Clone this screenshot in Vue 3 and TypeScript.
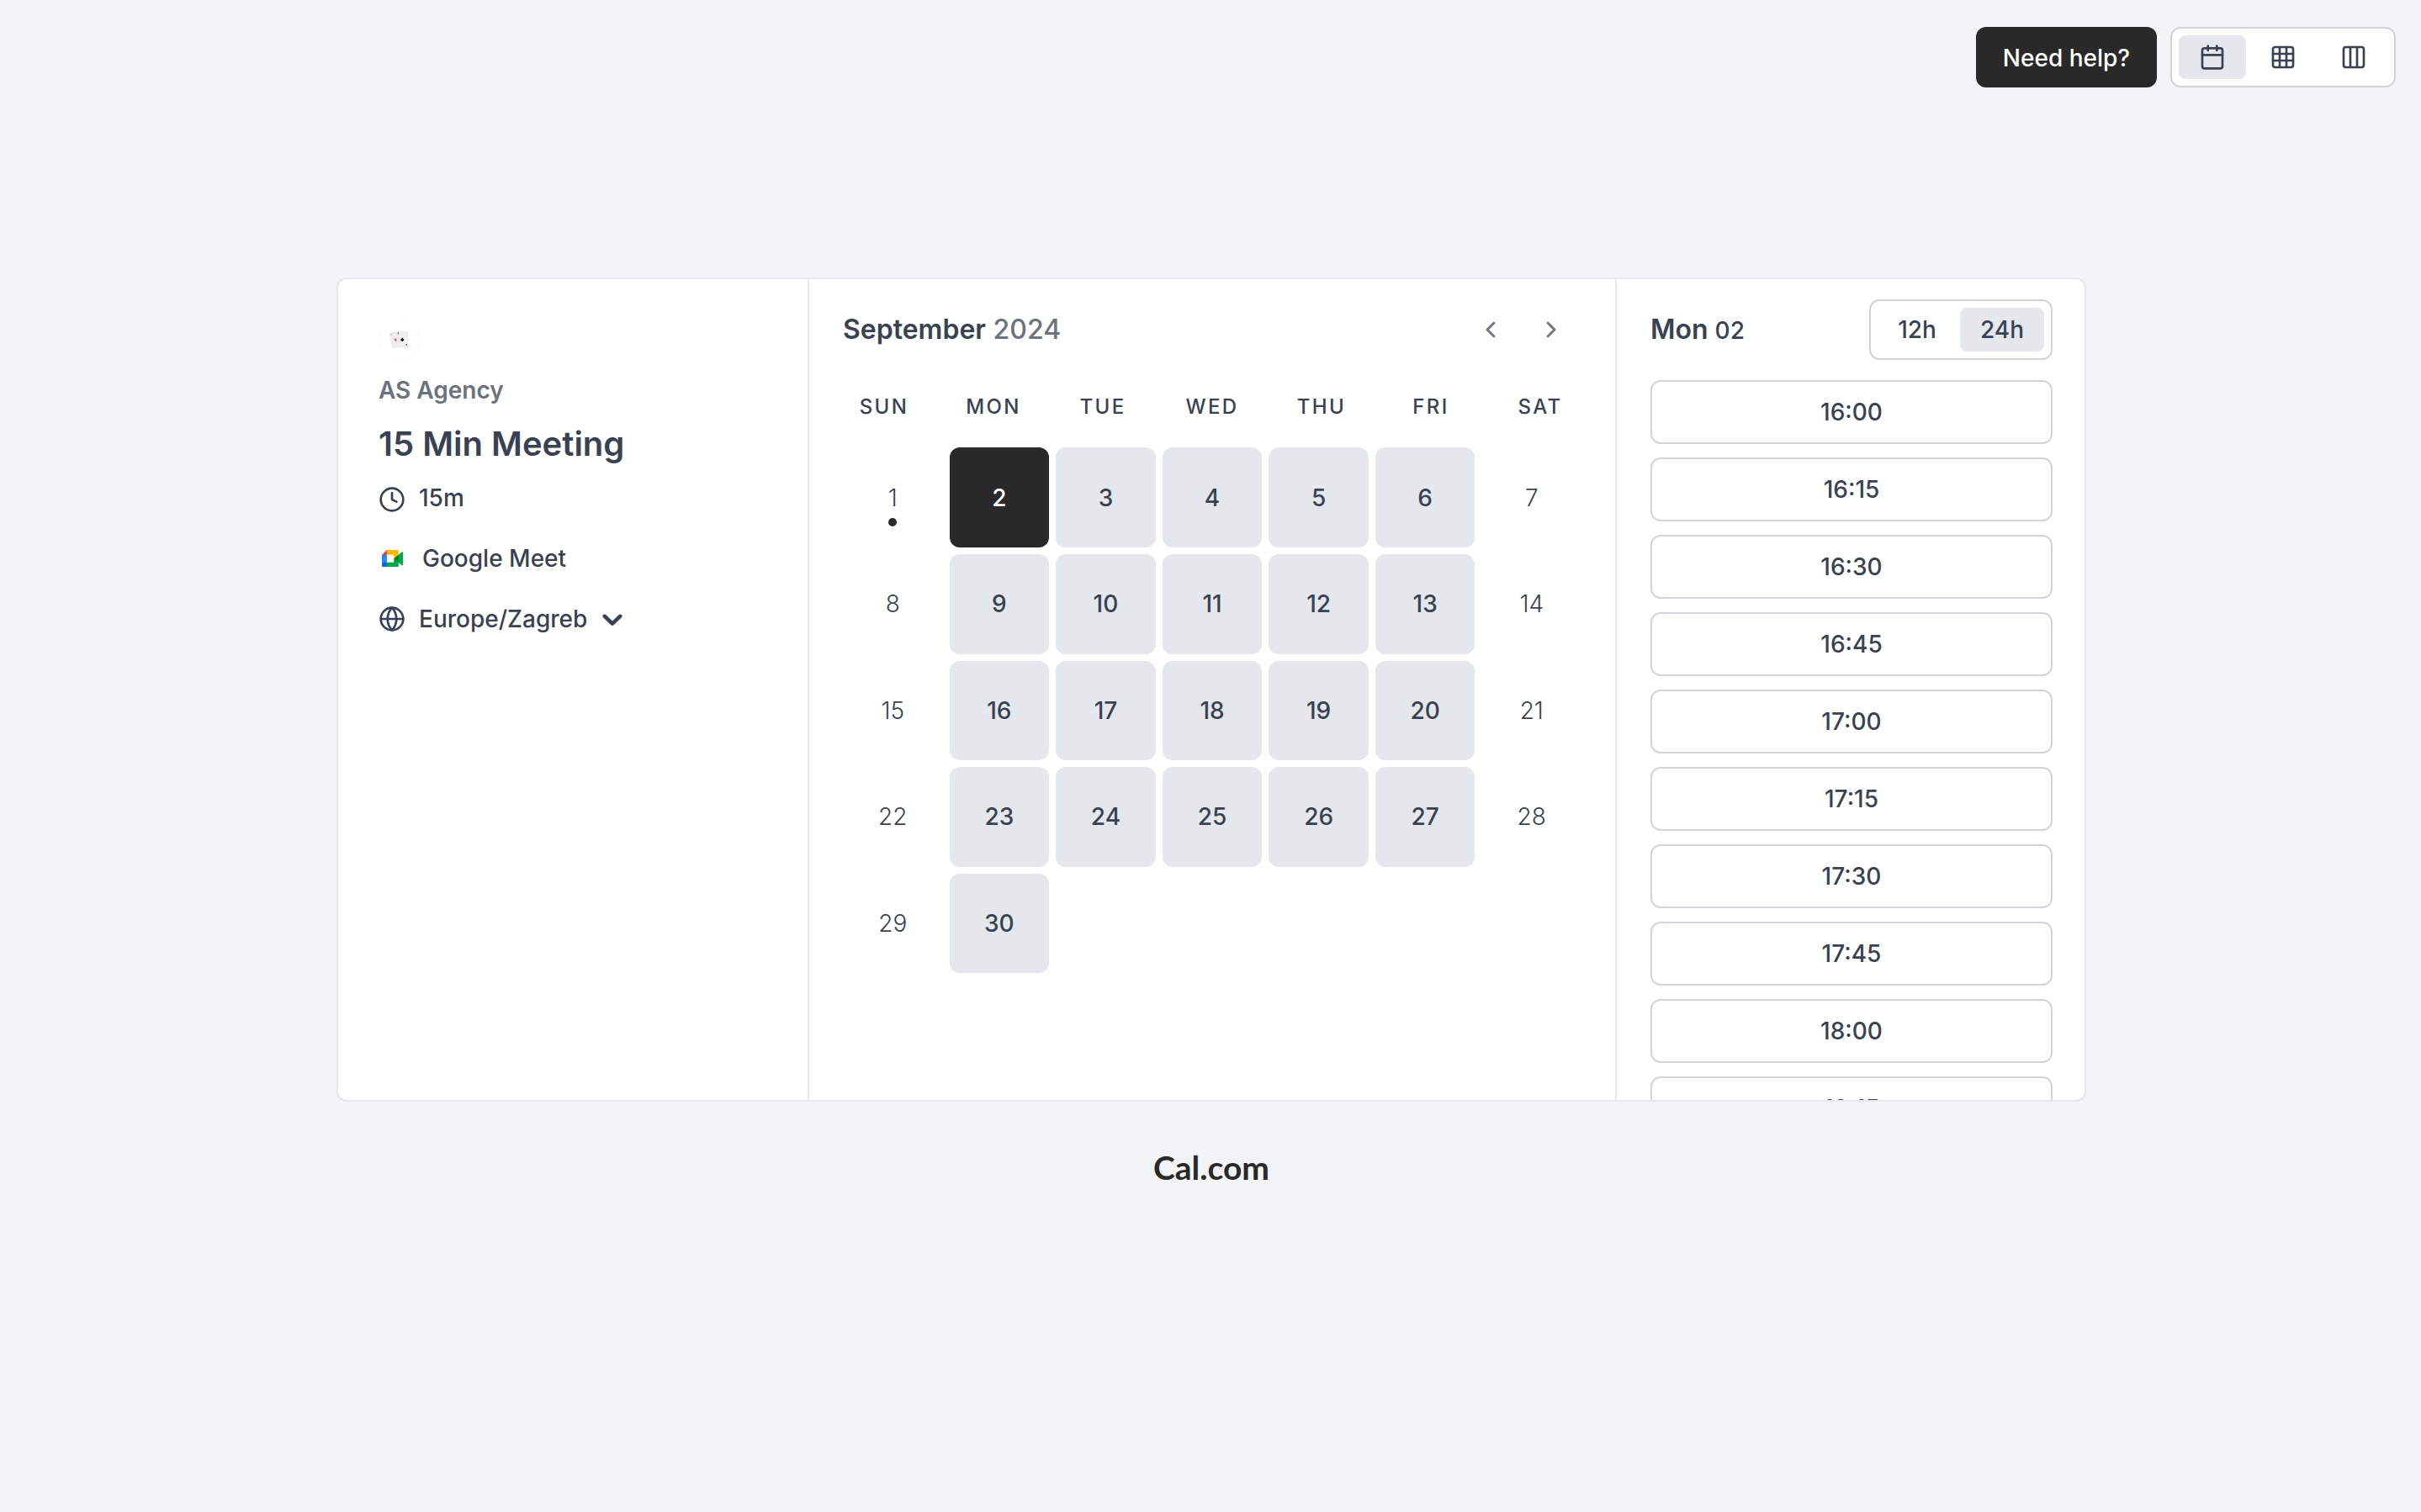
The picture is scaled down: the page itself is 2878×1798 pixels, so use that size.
<script setup lang="ts">
interface Day {
  n: number
  open: boolean
}

const weekdays: string[] = ['SUN', 'MON', 'TUE', 'WED', 'THU', 'FRI', 'SAT']
const today = 1
const selected = 2

const days: Day[] = Array.from({ length: 30 }, (_, i) => ({
  n: i + 1,
  open: i % 7 !== 0 && i % 7 !== 6,
}))

const slots: string[] = Array.from({ length: 10 }, (_, i) => {
  const minutes = 16 * 60 + i * 15
  return `${Math.floor(minutes / 60)}:${String(minutes % 60).padStart(2, '0')}`
})
</script>

<template>
  <div class="page">
    <header class="topbar">
      <button class="help">Need help?</button>
      <div class="group layouts">
        <button class="seg active">
          <svg class="icon" viewBox="0 0 24 24"><rect x="3" y="4" width="18" height="18" rx="2" /><path d="M16 2v4M8 2v4M3 10h18" /></svg>
        </button>
        <button class="seg">
          <svg class="icon" viewBox="0 0 24 24"><rect x="3" y="3" width="18" height="18" rx="2" /><path d="M3 9h18M3 15h18M9 3v18M15 3v18" /></svg>
        </button>
        <button class="seg">
          <svg class="icon" viewBox="0 0 24 24"><rect x="3" y="3" width="18" height="18" rx="2" /><path d="M9 3v18M15 3v18" /></svg>
        </button>
      </div>
    </header>

    <main class="card">
      <section class="info">
        <div class="avatar">
          <svg viewBox="0 0 48 48" width="48" height="48">
            <circle cx="24" cy="24" r="23.7" fill="#fff" stroke="#f3f3f3" stroke-width=".5" />
            <path d="M13 15.6l9-1.4 3 18.6-9 1.6z" fill="#ededec" />
            <rect x="21.5" y="14" width="13.5" height="19" rx=".6" fill="#efefee" stroke="#e4e4e3" stroke-width=".3" />
            <path d="M14.3 17.5l1.6-.2-.5 1.7zM18.6 22.6l1.4.2 1.4-.4v3l-1 .6-1.8-2z" fill="#fb5b63" />
            <path d="M28.3 21.6l1.9 2.2c.4 1.2-.7 1.9-1.4 1.3l.3 1h-1.6l.3-1c-.7.6-1.8-.1-1.4-1.3z" fill="#111" />
            <path d="M22.9 15.3h1v1h-.3v1.5h-.8v-1.5zM32.7 29h1v2h-1z" fill="#333" />
          </svg>
        </div>
        <p class="org">AS Agency</p>
        <h1 class="title">15 Min Meeting</h1>
        <div class="meta">
          <div class="row">
            <svg class="icon low" viewBox="0 0 24 24"><circle cx="12" cy="12" r="10" /><path d="M12 6v6l4 2" /></svg>
            <span>15m</span>
          </div>
          <div class="row meet">
            <svg class="meet-logo" viewBox="0 0 87.5 72">
              <path fill="#00832d" d="M49.5 36l8.53 9.75 11.47 7.33 2-17.02-2-16.64-11.69 6.44z" />
              <path fill="#0066da" d="M0 51.5V66c0 3.315 2.685 6 6 6h14.5l3-10.96-3-9.54-9.95-3z" />
              <path fill="#e94235" d="M20.5 0L0 20.5l10.55 3 9.95-3 2.95-9.41z" />
              <path fill="#2684fc" d="M20.5 20.5H0v31h20.5z" />
              <path fill="#00ac47" d="M82.6 8.68L69.5 19.42v33.66l13.16 10.79c1.97 1.54 4.85.135 4.85-2.37V11c0-2.535-2.945-3.925-4.91-2.32zM49.5 36v15.5h-29V72h43c3.315 0 6-2.685 6-6V53.08z" />
              <path fill="#ffba00" d="M63.5 0h-43v20.5h29V36l20-16.57V6c0-3.315-2.685-6-6-6z" />
            </svg>
            <span>Google Meet</span>
          </div>
          <div class="row">
            <svg class="icon" viewBox="0 0 24 24"><circle cx="12" cy="12" r="10" /><path d="M2 12h20M12 2a15.3 15.3 0 0 1 4 10 15.3 15.3 0 0 1-4 10 15.3 15.3 0 0 1-4-10 15.3 15.3 0 0 1 4-10z" /></svg>
            <span>Europe/Zagreb</span>
            <svg class="caret" viewBox="0 0 20 20"><path d="M4.516 7.548c.436-.446 1.043-.481 1.576 0L10 11.295l3.908-3.747c.533-.481 1.141-.446 1.574 0 .436.445.408 1.197 0 1.615-.406.418-4.695 4.502-4.695 4.502-.217.223-.502.335-.787.335s-.57-.112-.789-.335c0 0-4.287-4.084-4.695-4.502s-.436-1.17 0-1.615z" /></svg>
          </div>
        </div>
      </section>

      <section class="calendar">
        <div class="month">
          <div class="month-name"><strong>September</strong> <span>2024</span></div>
          <div class="nav">
            <svg class="icon" viewBox="0 0 24 24"><path d="M15 18l-6-6 6-6" /></svg>
            <svg class="icon" viewBox="0 0 24 24"><path d="M9 18l6-6-6-6" /></svg>
          </div>
        </div>
        <div class="weekdays">
          <div v-for="d in weekdays" :key="d">{{ d }}</div>
        </div>
        <div class="days">
          <div
            v-for="d in days"
            :key="d.n"
            class="day"
            :class="{ open: d.open, selected: d.n === selected }"
          >
            {{ d.n }}
            <i v-if="d.n === today" class="dot"></i>
          </div>
        </div>
      </section>

      <section class="times">
        <div class="times-head">
          <div class="date"><strong>Mon</strong><span>02</span></div>
          <div class="group">
            <button class="seg h12">12h</button>
            <button class="seg h24 active">24h</button>
          </div>
        </div>
        <div class="slots">
          <button v-for="s in slots" :key="s" class="slot">{{ s }}</button>
        </div>
      </section>
    </main>

    <footer class="brand">Cal.com</footer>
  </div>
</template>

<style>
body {
  background: #f3f4f6;
}
</style>

<style scoped>
.page {
  min-height: 100vh;
  box-sizing: border-box;
  padding-top: 32px;
  background: #f3f4f6;
  color: #384252;
  font-family: Inter, "Liberation Sans", sans-serif;
  font-size: 28px;
  font-weight: 500;
  line-height: 40px;
}
.page * {
  box-sizing: border-box;
}
button {
  margin: 0;
  padding: 0;
  border: 0;
  background: none;
  color: inherit;
  font: inherit;
}
.icon {
  display: block;
  flex: none;
  width: 32px;
  height: 32px;
  fill: none;
  stroke: currentColor;
  stroke-width: 2;
  stroke-linecap: round;
  stroke-linejoin: round;
}
.topbar {
  display: flex;
  justify-content: flex-end;
  gap: 16px;
  height: 72px;
  padding-right: 30px;
}
.help {
  width: 215px;
  padding-top: 1px;
  border-radius: 12px;
  background: #292929;
  color: #fff;
}
.group {
  display: flex;
  gap: 4px;
  height: 72px;
  padding: 8px;
  border: 2px solid #d1d5da;
  border-radius: 12px;
  background: #fff;
}
.seg {
  display: flex;
  align-items: center;
  justify-content: center;
  width: 80px;
  height: 52px;
  border-radius: 8px;
}
.seg.h12 {
  width: 94px;
}
.seg.h24 {
  width: 100px;
}
.seg.active {
  background: #e4e7eb;
}
.card {
  display: flex;
  width: 2080px;
  height: 980px;
  margin: 226px 0 0 400px;
  overflow: hidden;
  border: 2px solid #e4e7eb;
  border-radius: 12px;
  background: #fff;
}
.info {
  width: 558px;
  padding: 48px;
}
.avatar {
  width: 48px;
  height: 48px;
}
.org {
  margin: 16px 0 0;
  color: #6b7280;
  font-weight: 600;
}
.title {
  margin: 20px 0 0;
  font-size: 40px;
  font-weight: 600;
  line-height: 48px;
}
.meta {
  display: flex;
  flex-direction: column;
  gap: 32px;
  margin-top: 20px;
}
.row {
  display: flex;
  align-items: center;
  height: 40px;
}
.row span {
  margin-left: 16px;
}
.low {
  margin-top: 4px;
}
.meet-logo {
  width: 25px;
  height: 20.5px;
  margin: 0 3px 0 4px;
}
.row.meet span {
  margin-left: 20px;
}
.caret {
  width: 40px;
  height: 40px;
  margin-left: 10px;
  fill: currentColor;
}
.calendar {
  width: 960px;
  padding: 24px 40px 0;
  border-left: 2px solid #e4e7eb;
}
.month {
  display: flex;
  align-items: center;
  justify-content: space-between;
  height: 72px;
  padding-right: 20px;
  font-size: 32px;
}
.month-name strong,
.date strong {
  font-weight: 600;
}
.month-name span {
  color: #6b7280;
}
.nav {
  display: flex;
  gap: 40px;
  color: #6b7280;
}
.weekdays {
  display: grid;
  grid-template-columns: repeat(7, 1fr);
  gap: 32px;
  margin-top: 38px;
  font-size: 24px;
  letter-spacing: 2.4px;
  line-height: 36px;
  text-align: center;
}
.days {
  display: grid;
  grid-template-columns: repeat(7, 1fr);
  gap: 8px;
  margin-top: 30.4px;
}
.day {
  position: relative;
  display: flex;
  align-items: center;
  justify-content: center;
  aspect-ratio: 1;
  border-radius: 12px;
  font-weight: 300;
}
.day.open {
  background: #e4e7eb;
  font-weight: 500;
}
.day.selected {
  background: #292929;
  color: #fff;
}
.dot {
  position: absolute;
  bottom: 25px;
  left: 50%;
  width: 10px;
  height: 10px;
  margin-left: -5px;
  border-radius: 50%;
  background: #292929;
}
.times {
  flex: 1;
  padding: 24px 38px 0 40px;
  border-left: 2px solid #e4e7eb;
}
.times-head {
  display: flex;
  align-items: center;
  justify-content: space-between;
}
.date {
  display: flex;
  align-items: baseline;
  gap: 8px;
}
.date strong {
  font-size: 32px;
}
.slots {
  display: flex;
  flex-direction: column;
  gap: 16px;
  margin-top: 24px;
}
.slot {
  flex: none;
  height: 76px;
  border: 2px solid #d1d5da;
  border-radius: 12px;
}
.brand {
  margin-top: 54px;
  padding-left: 2px;
  color: #292929;
  font-family: Lato, sans-serif;
  font-size: 39px;
  font-weight: 700;
  line-height: 48px;
  text-align: center;
}
</style>
